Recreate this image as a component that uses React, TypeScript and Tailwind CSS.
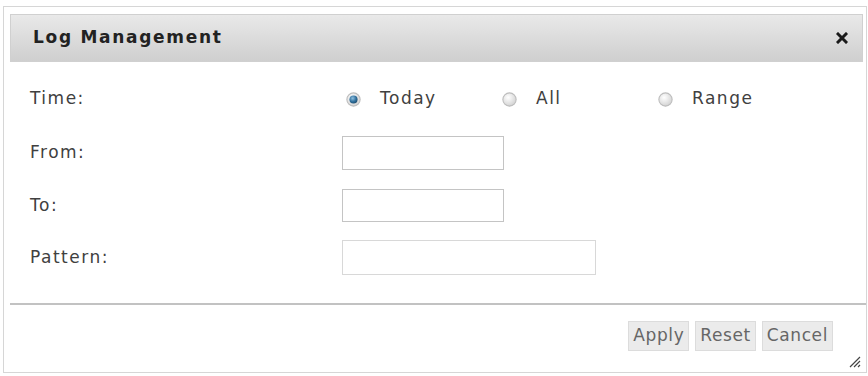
import React from "react";

function Radio({ checked }: { checked?: boolean }) {
  return (
    <svg width="15" height="15" viewBox="0 0 14 14" className="shrink-0">
      <defs>
        <radialGradient id="rg-off" cx="0.4" cy="0.35" r="0.7">
          <stop offset="0" stopColor="#ffffff" />
          <stop offset="1" stopColor="#d0d0d0" />
        </radialGradient>
        <radialGradient id="rg-on" cx="0.4" cy="0.35" r="0.7">
          <stop offset="0" stopColor="#8fc0e0" />
          <stop offset="0.6" stopColor="#2f6f9c" />
          <stop offset="1" stopColor="#1d4a6c" />
        </radialGradient>
      </defs>
      <circle cx="7" cy="7" r="6.2" fill="url(#rg-off)" stroke="#bdbdbd" strokeWidth="1" />
      {checked && <circle cx="7" cy="7" r="3.8" fill="url(#rg-on)" />}
    </svg>
  );
}

function RadioItem({ label, checked }: { label: string; checked?: boolean }) {
  return (
    <div className="flex w-[156px] items-center gap-[19px]">
      <Radio checked={checked} />
      <span>{label}</span>
    </div>
  );
}

export default function App() {
  return (
    <div
      className="h-[376px] w-[868px] bg-white pl-[3px] pt-[6px] text-[17px] tracking-[1.5px] text-[#404040]"
      style={{ fontFamily: '"DejaVu Sans", Verdana, sans-serif' }}
    >
      <div className="relative flex h-[367px] w-[864px] flex-col border border-[#d6d6d6] bg-white">
        {/* Header */}
        <div className="ml-[6px] mr-[3px] mt-[7px] flex h-[48px] items-center justify-between border border-[#d0d0d0] bg-gradient-to-b from-[#e9e9e9] to-[#cfcfcf] pl-[22px] pr-[14px]">
          <span className="text-[17px] font-bold tracking-[1.7px] text-[#222]">Log Management</span>
          <svg width="12" height="12" viewBox="0 0 12 12">
            <path d="M2 2 L10 10 M10 2 L2 10" stroke="#1a1a1a" strokeWidth="3" strokeLinecap="square" />
          </svg>
        </div>

        {/* Form */}
        <div className="flex flex-col pl-[26px]">
          <div className="mt-[20px] flex h-[34px] items-center">
            <span className="w-[316px]">Time:</span>
            <div className="flex items-center">
              <RadioItem label="Today" checked />
              <RadioItem label="All" />
              <RadioItem label="Range" />
            </div>
          </div>
          <div className="mt-[20px] flex h-[34px] items-center">
            <span className="w-[312px]">From:</span>
            <input className="h-[34px] w-[162px] border border-[#c4c4c4] bg-white outline-none" />
          </div>
          <div className="mt-[19px] flex h-[33px] items-center">
            <span className="w-[312px]">To:</span>
            <input className="h-[33px] w-[162px] border border-[#c4c4c4] bg-white outline-none" />
          </div>
          <div className="mt-[18px] flex h-[35px] items-center">
            <span className="w-[312px]">Pattern:</span>
            <input className="h-[35px] w-[254px] border border-[#d8d8d8] bg-white outline-none" />
          </div>
        </div>

        {/* Separator */}
        <div className="ml-[6px] mt-[28px] h-[2px] bg-[#c2c2c2]" />

        {/* Buttons */}
        <div className="mr-[33px] mt-[16px] flex justify-end gap-[6px]">
          <button className="h-[30px] border border-[#dcdcdc] bg-[#ebebeb] px-[4px] text-[17px] tracking-[0.6px] text-[#666]">
            Apply
          </button>
          <button className="h-[30px] border border-[#dcdcdc] bg-[#ebebeb] px-[4px] text-[17px] tracking-[0.6px] text-[#666]">
            Reset
          </button>
          <button className="h-[30px] border border-[#dcdcdc] bg-[#ebebeb] px-[4px] text-[17px] tracking-[0.6px] text-[#666]">
            Cancel
          </button>
        </div>

        {/* Resize grip */}
        <svg className="absolute bottom-[4px] right-[5px]" width="13" height="13" viewBox="0 0 13 13">
          <path d="M12 2 L2 12 M12 6 L6 12 M12 10 L10 12" stroke="#444" strokeWidth="1.2" />
        </svg>
      </div>
    </div>
  );
}
